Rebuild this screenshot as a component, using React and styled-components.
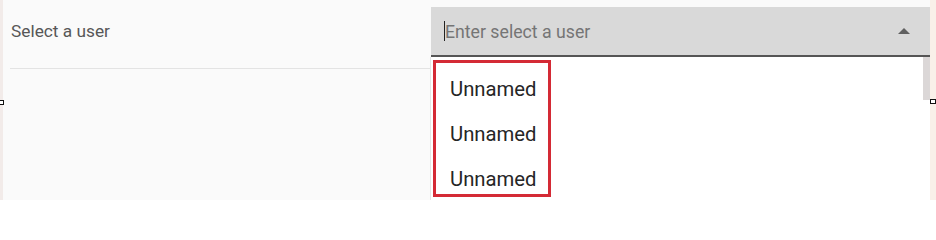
import React from "react";
import styled, { createGlobalStyle } from "styled-components";

const Global = createGlobalStyle`
  html, body { margin: 0; padding: 0; background: #ffffff; }
  body { font-family: Roboto, "Liberation Sans", sans-serif; }
`;

const Page = styled.div`
  width: 936px;
  height: 205px;
  display: flex;
  flex-direction: column;
  background: #ffffff;
  overflow: hidden;
`;

const Frame = styled.div`
  display: flex;
  height: 200px;
`;

const Edge = styled.div`
  position: relative;
  width: ${(p) => p.$w}px;
  background: ${(p) => p.$bg};
  flex: none;
`;

const Handle = styled.span`
  position: absolute;
  top: ${(p) => p.$top}px;
  ${(p) => (p.$side === "left" ? "left: -2px;" : "left: 0;")}
  width: 6px;
  height: 5px;
  border: 1px solid #111;
  box-sizing: border-box;
  background: #fff;
  z-index: 5;
`;

const Panel = styled.div`
  flex: 1;
  display: flex;
  align-items: flex-start;
  padding: 7px 0 0 7px;
  background: #fafafa;
  overflow: hidden;
`;

const LabelCell = styled.div`
  width: 421px;
  height: 61px;
  border-bottom: 1px solid #e3e3e3;
  flex: none;
`;

const Label = styled.div`
  padding-left: 1px;
  line-height: 48px;
  font-size: 17.3px;
  color: #575757;
`;

const Field = styled.div`
  position: relative;
  flex: 1;
`;

const InputBox = styled.div`
  height: 48px;
  background: #d9d9d9;
  border-bottom: 2px solid #555555;
  display: flex;
  align-items: center;
  padding: 0 20px 0 13px;
`;

const Caret = styled.span`
  width: 1px;
  height: 20px;
  background: #222;
  flex: none;
`;

const Placeholder = styled.span`
  flex: 1;
  font-size: 17.7px;
  color: #757575;
  margin-top: 1px;
`;

const Arrow = styled.span`
  width: 0;
  height: 0;
  border-left: 6px solid transparent;
  border-right: 6px solid transparent;
  border-bottom: 6px solid #606060;
  margin-top: -1px;
`;

const Menu = styled.div`
  position: absolute;
  top: 100%;
  left: 0;
  right: 0;
  height: 160px;
  background: #ffffff;
  box-shadow: -1px 0 0 #e6e6e6;
  padding: 3px 0 0 2px;
  z-index: 2;
`;

const ScrollThumb = styled.div`
  position: absolute;
  top: 0;
  right: 0;
  width: 7px;
  height: 43px;
  background: #dbd7d7;
`;

const Highlight = styled.div`
  width: 118px;
  height: 137px;
  border: 3px solid #d42a35;
  box-sizing: border-box;
  padding-top: 4px;
`;

const Item = styled.div`
  padding-left: 14px;
  line-height: 45px;
  font-size: 20.3px;
  color: #262626;
  white-space: nowrap;
`;

export default function App() {
  const users = ["Unnamed", "Unnamed", "Unnamed"];
  return (
    <>
      <Global />
      <Page>
        <Frame>
          <Edge $w={3} $bg="#f2ebe9">
            <Handle $side="left" $top={100} />
          </Edge>
          <Panel>
            <LabelCell>
              <Label>Select a user</Label>
            </LabelCell>
            <Field>
              <InputBox>
                <Caret />
                <Placeholder>Enter select a user</Placeholder>
                <Arrow />
              </InputBox>
              <Menu>
                <ScrollThumb />
                <Highlight>
                  {users.map((u, i) => (
                    <Item key={i}>{u}</Item>
                  ))}
                </Highlight>
              </Menu>
            </Field>
          </Panel>
          <Edge $w={6} $bg="#f9f0e9">
            <Handle $side="right" $top={99} />
          </Edge>
        </Frame>
      </Page>
    </>
  );
}
